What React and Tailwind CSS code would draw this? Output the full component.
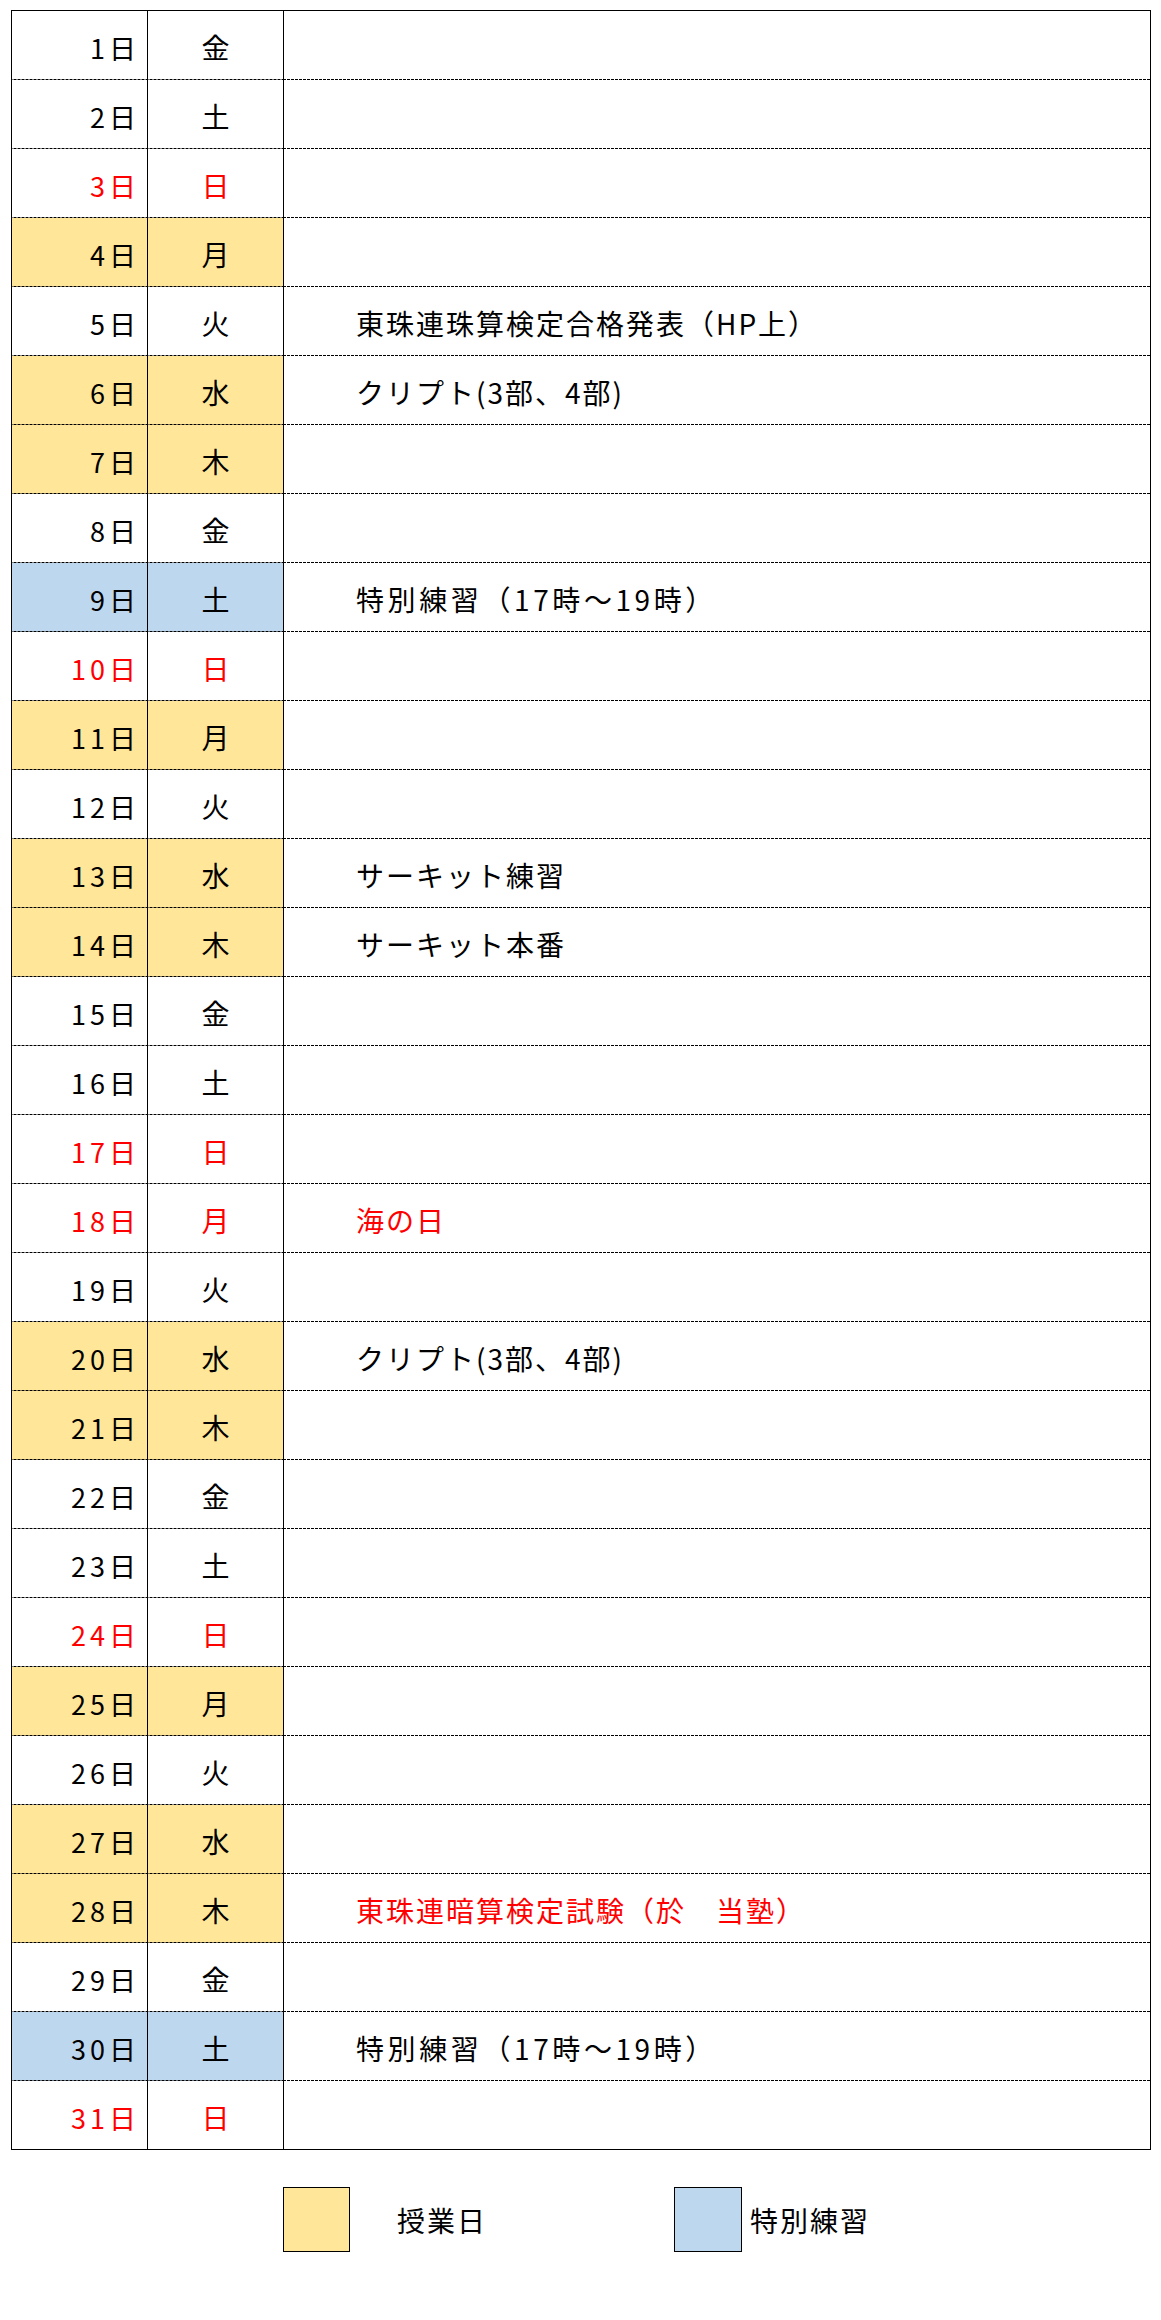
import React from "react"

const days = [
  { d: 1, w: "金" },
  { d: 2, w: "土" },
  { d: 3, w: "日", red: true },
  { d: 4, w: "月", fill: "y" },
  { d: 5, w: "火", note: "東珠連珠算検定合格発表（HP上）" },
  { d: 6, w: "水", fill: "y", note: "クリプト(3部、4部)" },
  { d: 7, w: "木", fill: "y" },
  { d: 8, w: "金" },
  { d: 9, w: "土", fill: "b", note: "特別練習（17時～19時）", wide: true },
  { d: 10, w: "日", red: true },
  { d: 11, w: "月", fill: "y" },
  { d: 12, w: "火" },
  { d: 13, w: "水", fill: "y", note: "サーキット練習" },
  { d: 14, w: "木", fill: "y", note: "サーキット本番" },
  { d: 15, w: "金" },
  { d: 16, w: "土" },
  { d: 17, w: "日", red: true },
  { d: 18, w: "月", red: true, note: "海の日", noteRed: true },
  { d: 19, w: "火" },
  { d: 20, w: "水", fill: "y", note: "クリプト(3部、4部)" },
  { d: 21, w: "木", fill: "y" },
  { d: 22, w: "金" },
  { d: 23, w: "土" },
  { d: 24, w: "日", red: true },
  { d: 25, w: "月", fill: "y" },
  { d: 26, w: "火" },
  { d: 27, w: "水", fill: "y" },
  { d: 28, w: "木", fill: "y", note: "東珠連暗算検定試験（於　当塾）", noteRed: true },
  { d: 29, w: "金" },
  { d: 30, w: "土", fill: "b", note: "特別練習（17時～19時）", wide: true },
  { d: 31, w: "日", red: true },
]

// dotted row rule drawn as a bottom gradient on every cell
const dash =
  "bg-[linear-gradient(to_right,#000_3px,transparent_3px)] bg-[length:4px_1px] bg-bottom bg-repeat-x"

function Row({ day, last }) {
  const fill =
    day.fill === "y" ? "bg-[#FFE699]" : day.fill === "b" ? "bg-[#BDD7EE]" : "bg-white"
  const line = last ? "h-[68px]" : `h-[69px] pb-px ${dash}`
  const color = day.red ? "text-[#FF0000]" : "text-black"

  return (
    <div className="grid grid-cols-[136px_136px_1fr]">
      <div
        className={`${line} ${fill} ${color} flex items-center justify-end pt-1 pr-[7px] border-r border-black text-[27px] tracking-[4px]`}
      >
        {day.d}日
      </div>
      <div
        className={`${line} ${fill} ${color} flex items-center justify-center pt-1 border-r border-black text-[28px]`}
      >
        {day.w}
      </div>
      <div
        className={`${line} bg-white flex items-center pt-1 pl-[72px] text-[28px] ${
          day.wide ? "tracking-[3.6px]" : "tracking-[2px]"
        } ${day.noteRed ? "text-[#FF0000]" : "text-black"}`}
      >
        {day.note}
      </div>
    </div>
  )
}

export default function App() {
  return (
    <div className="w-[1161px] h-[2320px] bg-white font-['Noto_Sans_CJK_JP',sans-serif] leading-none">
      <div className="pt-[10px] pl-[11px]">
        <div className="w-[1140px] border border-black flex flex-col">
          {days.map((day, idx) => (
            <Row key={day.d} day={day} last={idx === days.length - 1} />
          ))}
        </div>
      </div>

      <div className="flex items-center mt-[37px] pl-[283px]">
        <div className="w-[67px] h-[65px] bg-[#FFE699] border border-black" />
        <span className="ml-[47px] text-[28px] tracking-[2px] text-black">授業日</span>
        <div className="ml-[187px] w-[68px] h-[65px] bg-[#BDD7EE] border border-black" />
        <span className="ml-[8px] text-[28px] tracking-[2px] text-black">特別練習</span>
      </div>
    </div>
  )
}
